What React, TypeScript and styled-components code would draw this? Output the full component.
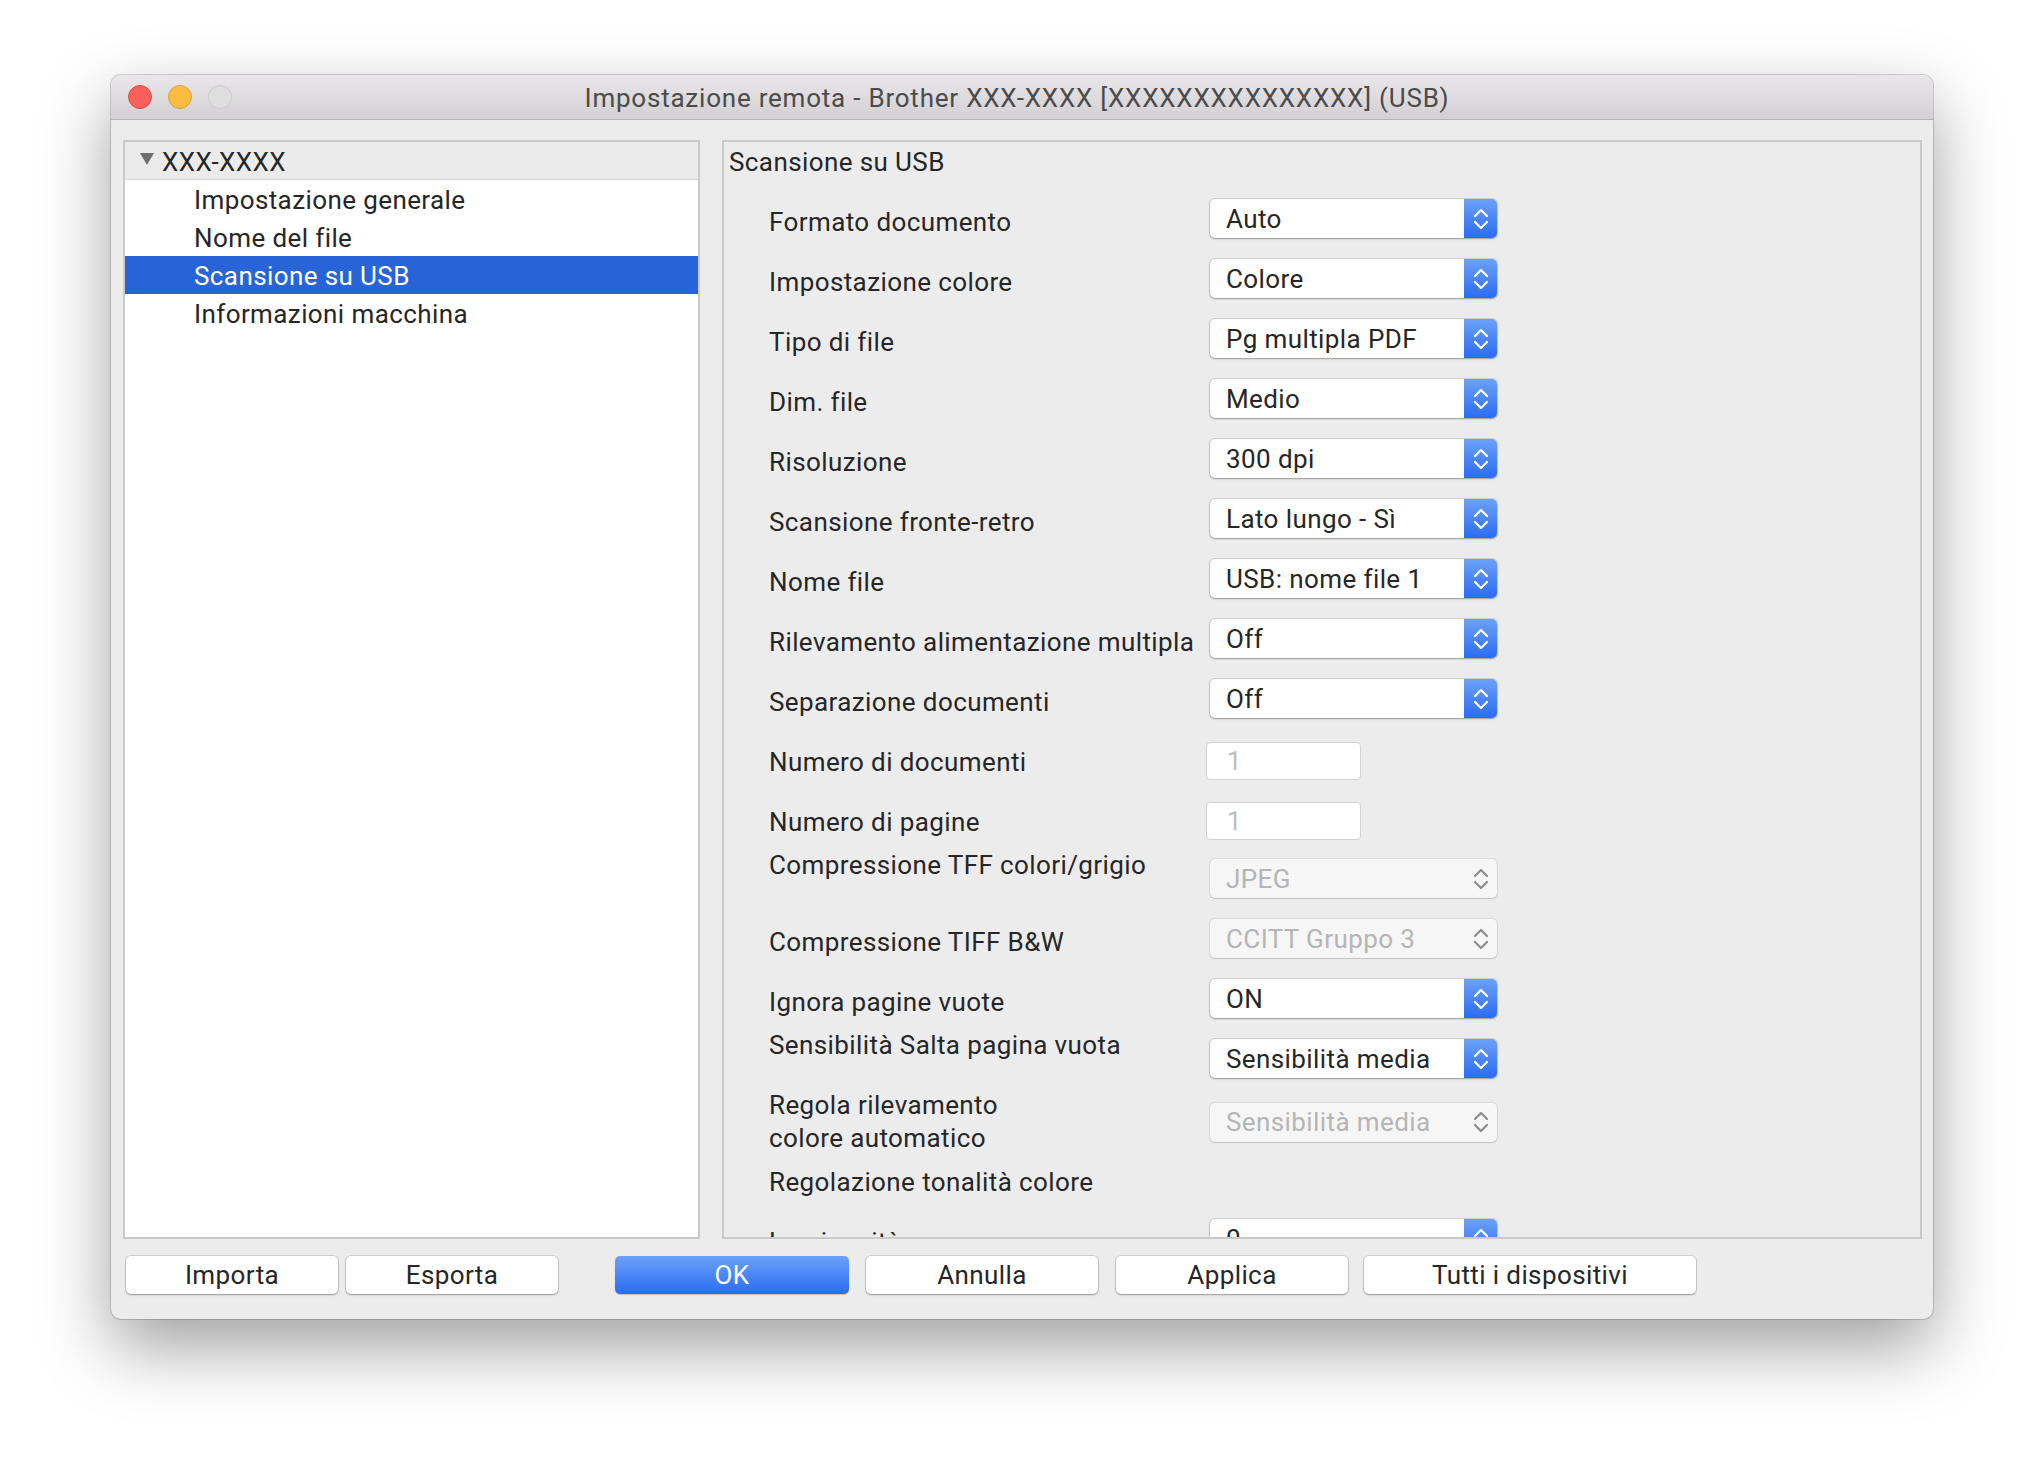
import React from 'react';
import styled, { createGlobalStyle } from 'styled-components';

const GlobalStyle = createGlobalStyle`
  html, body {
    margin: 0;
    padding: 0;
    background: #ffffff;
  }
  body {
    font-family: Roboto, "Noto Sans", "Liberation Sans", sans-serif;
    font-size: 26px;
    letter-spacing: 0.4px;
    color: #262626;
  }
`;

type Control =
  | { kind: 'select'; value: string }
  | { kind: 'disabled'; value: string }
  | { kind: 'input'; value: string }
  | { kind: 'none' };

interface SettingRow {
  label: string[];
  control: Control;
  top?: boolean;
}

const TREE_ITEMS = [
  'Impostazione generale',
  'Nome del file',
  'Scansione su USB',
  'Informazioni macchina',
];

const SETTINGS: SettingRow[] = [
  { label: ['Formato documento'], control: { kind: 'select', value: 'Auto' } },
  { label: ['Impostazione colore'], control: { kind: 'select', value: 'Colore' } },
  { label: ['Tipo di file'], control: { kind: 'select', value: 'Pg multipla PDF' } },
  { label: ['Dim. file'], control: { kind: 'select', value: 'Medio' } },
  { label: ['Risoluzione'], control: { kind: 'select', value: '300 dpi' } },
  { label: ['Scansione fronte-retro'], control: { kind: 'select', value: 'Lato lungo - Sì' } },
  { label: ['Nome file'], control: { kind: 'select', value: 'USB: nome file 1' } },
  { label: ['Rilevamento alimentazione multipla'], control: { kind: 'select', value: 'Off' } },
  { label: ['Separazione documenti'], control: { kind: 'select', value: 'Off' } },
  { label: ['Numero di documenti'], control: { kind: 'input', value: '1' } },
  { label: ['Numero di pagine'], control: { kind: 'input', value: '1' } },
  { label: ['Compressione TFF colori/grigio'], control: { kind: 'disabled', value: 'JPEG' }, top: true },
  { label: ['Compressione TIFF B&W'], control: { kind: 'disabled', value: 'CCITT Gruppo 3' } },
  { label: ['Ignora pagine vuote'], control: { kind: 'select', value: 'ON' } },
  { label: ['Sensibilità Salta pagina vuota'], control: { kind: 'select', value: 'Sensibilità media' }, top: true },
  {
    label: ['Regola rilevamento', 'colore automatico'],
    control: { kind: 'disabled', value: 'Sensibilità media' },
    top: true,
  },
  { label: ['Regolazione tonalità colore'], control: { kind: 'none' } },
  { label: ['Luminosità'], control: { kind: 'select', value: '0' } },
];

const Chevrons = ({ color }: { color: string }) => (
  <svg width="16" height="24" viewBox="0 0 16 24" fill="none" stroke={color} strokeWidth="2.2" strokeLinecap="round" strokeLinejoin="round">
    <path d="M2 9 L8 3 L14 9" />
    <path d="M2 15 L8 21 L14 15" />
  </svg>
);

const PopUp = ({ value, disabled }: { value: string; disabled?: boolean }) => (
  <SPopUp $disabled={disabled}>
    <span className="value">{value}</span>
    <SArrows $disabled={disabled}>
      <Chevrons color={disabled ? '#8c8c8c' : '#ffffff'} />
    </SArrows>
  </SPopUp>
);

const App = () => {
  return (
    <>
      <GlobalStyle />
      <SPage>
        <SWindow>
          <STitleBar>
            <STrafficLights>
              <SLight $fill="#fc605c" $edge="#de4a45" />
              <SLight $fill="#fdbc40" $edge="#dea236" />
              <SLight $fill="#dfdedf" $edge="#c9c9c9" />
            </STrafficLights>
            <div className="title">Impostazione remota - Brother XXX-XXXX [XXXXXXXXXXXXXXX] (USB)</div>
            <div />
          </STitleBar>

          <SContent>
            <SPanels>
              <STree>
                <STreeHeader>
                  <span className="disclosure" />
                  XXX-XXXX
                </STreeHeader>
                {TREE_ITEMS.map((item) => (
                  <STreeItem key={item} $selected={item === 'Scansione su USB'}>
                    {item}
                  </STreeItem>
                ))}
              </STree>

              <SSettings>
                <SSectionTitle>Scansione su USB</SSectionTitle>
                {SETTINGS.map((row, i) => (
                  <SRow key={i}>
                    <SLabel $top={row.top}>
                      {row.label.map((line) => (
                        <div key={line}>{line}</div>
                      ))}
                    </SLabel>
                    {row.control.kind === 'select' && <PopUp value={row.control.value} />}
                    {row.control.kind === 'disabled' && <PopUp value={row.control.value} disabled />}
                    {row.control.kind === 'input' && <SNumberField>{row.control.value}</SNumberField>}
                  </SRow>
                ))}
              </SSettings>
            </SPanels>

            <SButtonBar>
              <SButton $w={212} $ml={3}>Importa</SButton>
              <SButton $w={212} $ml={8}>Esporta</SButton>
              <SButton $w={234} $ml={57} $primary>OK</SButton>
              <SButton $w={232} $ml={17}>Annulla</SButton>
              <SButton $w={232} $ml={18}>Applica</SButton>
              <SButton $w={332} $ml={16}>Tutti i dispositivi</SButton>
            </SButtonBar>
          </SContent>
        </SWindow>
      </SPage>
    </>
  );
};

export default App;

const SPage = styled.div`
  padding: 75px 0 0 111px;
  height: 1468px;
  box-sizing: border-box;
  overflow: hidden;
`;

const SWindow = styled.div`
  width: 1822px;
  height: 1244px;
  background: #ececec;
  border-radius: 10px;
  overflow: hidden;
  display: flex;
  flex-direction: column;
  box-shadow: 0 0 0 1px rgba(0, 0, 0, 0.16), 0 28px 70px rgba(0, 0, 0, 0.38);
`;

const STitleBar = styled.div`
  height: 44px;
  flex-shrink: 0;
  display: grid;
  grid-template-columns: 1fr auto 1fr;
  align-items: center;
  background: linear-gradient(#e9e7e9, #d2d0d2);
  border-bottom: 1px solid #b3b3b3;

  .title {
    color: #4b4b4b;
    white-space: nowrap;
    letter-spacing: 0.78px;
    margin-right: 10px;
    padding-top: 2px;
  }
`;

const STrafficLights = styled.div`
  display: flex;
  gap: 16px;
  padding-left: 17px;
`;

const SLight = styled.span<{ $fill: string; $edge: string }>`
  width: 24px;
  height: 24px;
  border-radius: 50%;
  box-sizing: border-box;
  background: ${(p) => p.$fill};
  border: 1px solid ${(p) => p.$edge};
`;

const SContent = styled.div`
  flex: 1;
  display: flex;
  flex-direction: column;
  padding: 20px 11px 0 12px;
`;

const SPanels = styled.div`
  display: flex;
  gap: 22px;
  height: 1099px;
`;

const STree = styled.div`
  width: 577px;
  box-sizing: border-box;
  border: 2px solid #c9c9c9;
  background: #ffffff;
`;

const STreeHeader = styled.div`
  height: 38px;
  box-sizing: border-box;
  border-bottom: 1px solid #d6d6d6;
  background: #ebebeb;
  display: flex;
  align-items: center;
  padding: 3px 0 0 15px;
  line-height: 34px;

  .disclosure {
    width: 0;
    height: 0;
    border-left: 7px solid transparent;
    border-right: 7px solid transparent;
    border-top: 12px solid #6e6e6e;
    margin-right: 8px;
    margin-top: -6px;
  }
`;

const STreeItem = styled.div<{ $selected?: boolean }>`
  height: 38px;
  line-height: 40px;
  padding-left: 69px;
  background: ${(p) => (p.$selected ? '#2864d8' : 'transparent')};
  color: ${(p) => (p.$selected ? '#ffffff' : '#262626')};
`;

const SSettings = styled.div`
  flex: 1;
  box-sizing: border-box;
  border: 2px solid #c9c9c9;
  padding: 4px 0 0 5px;
  overflow: hidden;
`;

const SSectionTitle = styled.div`
  line-height: 33px;
  margin-bottom: 9px;
`;

const SRow = styled.div`
  display: grid;
  grid-template-columns: 441px 287px;
  height: 60px;
  padding-left: 40px;
  align-items: center;
`;

const SLabel = styled.div<{ $top?: boolean }>`
  align-self: start;
  line-height: 33px;
  margin-top: ${(p) => (p.$top ? '1px' : '18px')};
  white-space: nowrap;
`;

const SPopUp = styled.div<{ $disabled?: boolean }>`
  height: 39px;
  margin-top: 1px;
  display: flex;
  align-items: center;
  border-radius: 5px;
  background: ${(p) => (p.$disabled ? '#f6f6f6' : '#ffffff')};
  box-shadow: ${(p) =>
    p.$disabled
      ? '0 0 0 1px rgba(0, 0, 0, 0.07), 0 1px 1px rgba(0, 0, 0, 0.12)'
      : '0 0 0 1px rgba(0, 0, 0, 0.11), 0 1px 2px rgba(0, 0, 0, 0.28)'};
  overflow: hidden;

  .value {
    flex: 1;
    padding-left: 16px;
    color: ${(p) => (p.$disabled ? '#b5b5b5' : '#262626')};
    white-space: nowrap;
  }
`;

const SArrows = styled.div<{ $disabled?: boolean }>`
  width: 33px;
  height: 100%;
  display: flex;
  align-items: center;
  justify-content: center;
  background: ${(p) => (p.$disabled ? 'transparent' : 'linear-gradient(#6da2f7, #2a6bf3)')};
`;

const SNumberField = styled.div`
  width: 155px;
  height: 38px;
  box-sizing: border-box;
  margin-left: -4px;
  margin-top: 6px;
  border: 1px solid #d2d2d2;
  border-radius: 4px;
  background: #ffffff;
  color: #bdbdbd;
  padding-left: 20px;
  line-height: 36px;
`;

const SButtonBar = styled.div`
  display: flex;
  margin-top: 17px;
`;

const SButton = styled.div<{ $w: number; $ml: number; $primary?: boolean }>`
  width: ${(p) => p.$w}px;
  margin-left: ${(p) => p.$ml}px;
  height: 38px;
  line-height: 38px;
  text-align: center;
  border-radius: 5px;
  background: ${(p) => (p.$primary ? 'linear-gradient(#6ca1f7, #2a6bf3)' : '#ffffff')};
  color: ${(p) => (p.$primary ? '#ffffff' : '#262626')};
  box-shadow: ${(p) =>
    p.$primary
      ? '0 1px 1px rgba(0, 0, 0, 0.2)'
      : '0 0 0 1px rgba(0, 0, 0, 0.11), 0 1px 2px rgba(0, 0, 0, 0.28)'};
`;
